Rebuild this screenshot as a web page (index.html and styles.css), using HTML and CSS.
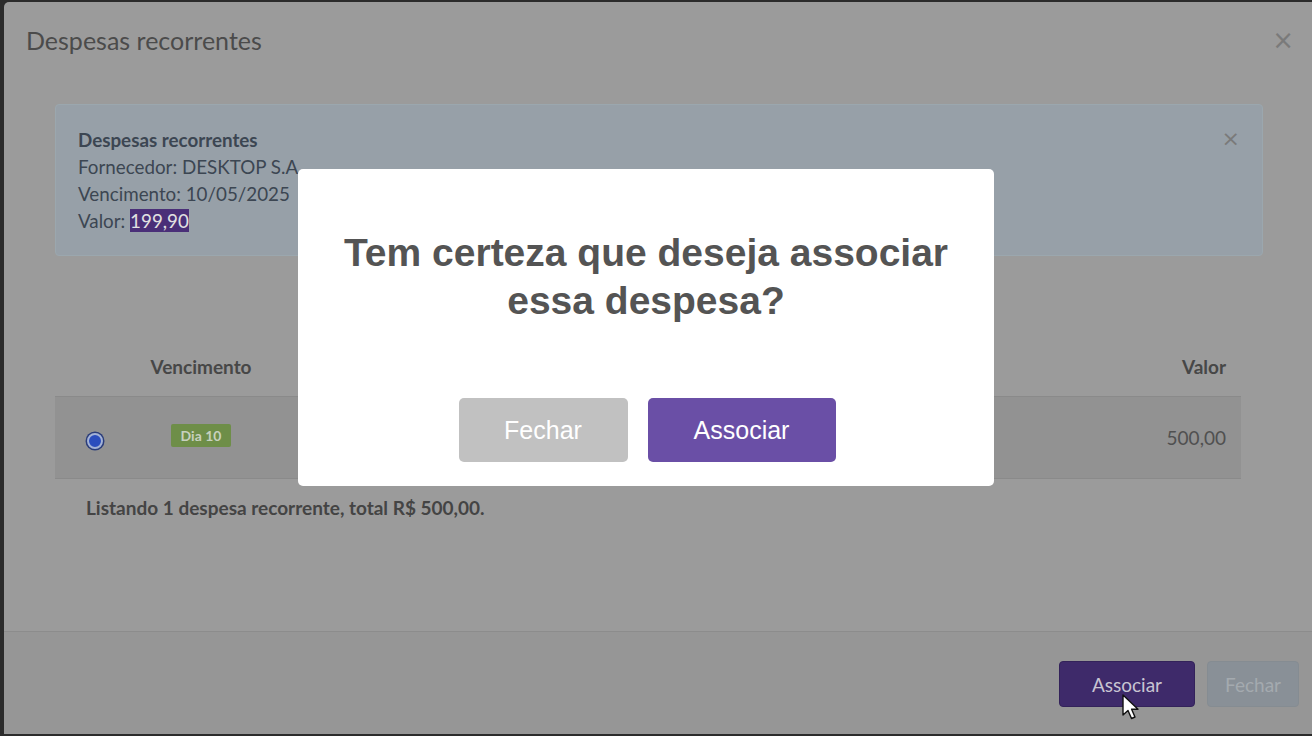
FILE: index.html
```html
<!DOCTYPE html>
<html lang="pt-BR">
<head>
  <meta charset="UTF-8" />
  <meta name="viewport" content="width=device-width, initial-scale=1.0" />
  <title>Despesas recorrentes</title>
  <link rel="stylesheet" href="styles.css">
</head>
<body>
  <div class="modal">
    <div class="modal-header">
      <h4>Despesas recorrentes</h4>
      <span class="close">&times;</span>
    </div>

    <div class="modal-body">
      <div class="alert">
        <span class="close small">&times;</span>
        <strong>Despesas recorrentes</strong><br>
        Fornecedor: DESKTOP S.A<br>
        Vencimento: 10/05/2025<br>
        Valor: <span class="selected">199,90</span>
      </div>

      <table class="grid">
        <thead>
          <tr>
            <th class="col-radio"></th>
            <th class="col-venc">Vencimento</th>
            <th></th>
            <th class="col-valor">Valor</th>
          </tr>
        </thead>
        <tbody>
          <tr>
            <td class="col-radio"><span class="radio"></span></td>
            <td class="col-venc"><span class="badge">Dia 10</span></td>
            <td></td>
            <td class="col-valor">500,00</td>
          </tr>
        </tbody>
      </table>

      <p class="summary">Listando 1 despesa recorrente, total R$ 500,00.</p>
    </div>

    <div class="modal-footer">
      <button class="btn btn-primary">Associar</button>
      <button class="btn btn-default">Fechar</button>
    </div>
  </div>

  <div class="swal-overlay">
    <div class="swal">
      <h2>Tem certeza que deseja associar essa despesa?</h2>
      <div class="swal-actions">
        <button class="swal-cancel">Fechar</button>
        <button class="swal-confirm">Associar</button>
      </div>
    </div>
  </div>

  <svg class="cursor" width="20" height="28" viewBox="0 0 20 28">
    <path d="M1 1 L1 21 L6 16.5 L9.5 24.5 L13 23 L9.6 15.2 L16 15.2 Z" fill="#fff" stroke="#111" stroke-width="1.4" stroke-linejoin="round"/>
  </svg>
</body>
</html>
```

FILE: styles.css
```css
body { margin: 0; background: #2b2b2b; font-family: Lato, "Open Sans", sans-serif; height: 736px; overflow: hidden; }
.modal { margin: 2px 0 0 4px; height: 732px; background: #9b9b9b; border-radius: 5px 0 0 0; display: flex; flex-direction: column; color: #454545; }
.modal-header { display: flex; justify-content: space-between; align-items: center; padding: 20px 18px 0 22px; height: 36px; }
.modal-header h4 { margin: 0; font-size: 25px; font-weight: 400; color: #4b4b4b; }
.close { color: #7a7a7a; font-size: 26px; font-family: "DejaVu Sans", sans-serif; line-height: 1; }
.close.small { float: right; font-size: 22px; margin-top: 2px; }

.modal-body { padding: 46px 49px 0 51px; flex: 1; }
.alert { background: #97a0a8; border: 1px solid #9ba7ae; border-radius: 4px; padding: 21px 22px; font-size: 18.8px; line-height: 27px; color: #3c4652; height: 108px; }
.alert strong { font-weight: 700; }
.selected { background: #4a2f78; color: #e2e2e2; }

.grid { width: 1186px; border-collapse: collapse; margin-top: 99px; font-size: 19px; }
.grid th { font-weight: 700; color: #474747; line-height: 23px; padding: 0 15px 18px; vertical-align: bottom; }
.grid td { background: #929292; border-top: 1px solid #8a8a8a; border-bottom: 1px solid #8a8a8a; height: 81px; padding: 0 15px; vertical-align: middle; }
.col-radio { width: 50px; text-align: center; }
.col-venc { width: 102px; text-align: center; }
.col-valor { text-align: right; color: #505050; }
th.col-valor { color: #474747; }
.radio { display: inline-block; vertical-align: middle; width: 12px; height: 12px; border-radius: 50%; background: #2b4dbd; border: 2px solid #a3b2d6; box-shadow: 0 0 0 1.5px #2b3d7a; margin-top: 2px; }
.badge { display: inline-block; vertical-align: middle; background: #6e8e48; color: #c7d1bf; font-size: 14px; font-weight: 700; padding: 3px 10px; border-radius: 2px; margin-bottom: 4px; }
.summary { margin: 17px 0 0 31px; font-size: 19px; font-weight: 700; color: #444; }

.modal-footer { border-top: 1px solid #8c8c8c; background: #969696; height: 103px; display: flex; justify-content: flex-end; align-items: flex-start; gap: 12px; padding: 29px 13px 0 0; box-sizing: border-box; }
.btn { font-family: Lato, sans-serif; font-size: 19px; height: 46px; border: none; border-radius: 4px; padding: 0 32px; }
.btn-primary { background: #3e2a6a; color: #c8c4d2; border: 1px solid #33225a; }
.btn-default { background: #899097; color: #a4aaaf; padding: 0 17px; border: 1px solid #858c92; }

.swal-overlay { position: fixed; inset: 0; display: flex; justify-content: center; align-items: flex-start; padding: 169px 20px 0 0; }
.swal { width: 696px; height: 317px; background: #fff; border-radius: 5px; box-sizing: border-box; padding-top: 60px; text-align: center; font-family: "Liberation Sans", Arial, sans-serif; }
.swal h2 { margin: 0 auto; width: 670px; font-size: 39px; line-height: 48px; font-weight: 700; color: #545454; }
.swal-actions { display: flex; justify-content: center; gap: 20px; margin-top: 73px; padding-left: 2px; }
.swal-actions button { font-family: "Liberation Sans", Arial, sans-serif; font-size: 25px; height: 64px; border: none; border-radius: 5px; color: #fff; }
.swal-cancel { background: #c1c1c1; width: 169px; }
.swal-confirm { background: #6a4fa6; width: 188px; }

.cursor { position: fixed; left: 1122px; top: 694px; }
```
